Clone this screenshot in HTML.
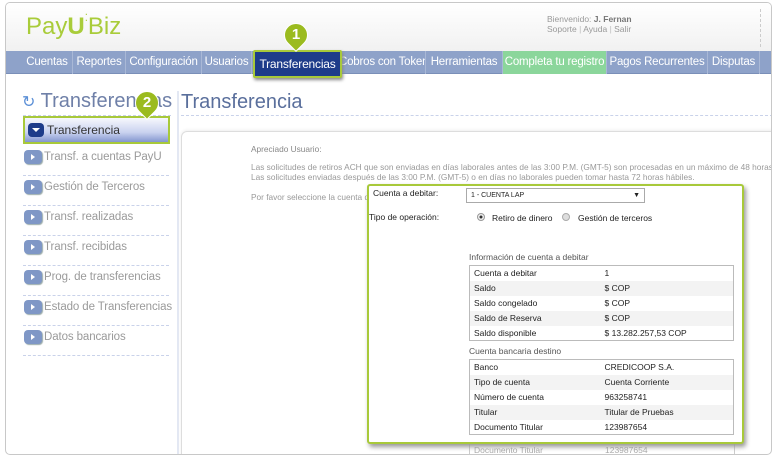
<!DOCTYPE html>
<html><head><meta charset="utf-8"><style>
*{margin:0;padding:0;box-sizing:border-box}
body{width:780px;height:462px;background:#fff;font-family:"Liberation Sans",Arial,sans-serif;position:relative;overflow:hidden}
.abs{position:absolute}
#frame{left:5px;top:2px;width:767px;height:453px;border:1px solid #c8c8c8;border-radius:5px;background:#fff;overflow:hidden}
#hdr{left:0;top:0;width:100%;height:48px;background:linear-gradient(#fff,#f1f1f1)}
#nav{left:0;top:48px;width:100%;height:23px;background:#8ea2c9;border-bottom:1px solid #7a8fb8}
.ni{position:absolute;top:0;height:23px;line-height:22px;color:#fff;font-size:11.5px;border-right:1px solid #a9b8d6;text-align:center;white-space:nowrap;letter-spacing:-0.2px;overflow:hidden}
.side{position:absolute;left:22px;width:146px;height:30px;border-bottom:1px dashed #c9d2ea;color:#9a9a9a;font-size:11.5px;line-height:22px;white-space:nowrap;letter-spacing:-0.1px}
.side i{position:absolute;left:1px;top:4px;width:18px;height:14px;border-radius:4px;background:#7f97c6;box-shadow:1px 1px 1px #9aa}
.side i:after{content:"";position:absolute;left:7px;top:4px;border-left:4px solid #fff;border-top:3px solid transparent;border-bottom:3px solid transparent}
.side span{position:absolute;left:21px;top:0}
.t{font-size:8.3px;color:#999;white-space:nowrap}
table{border-collapse:collapse;font-size:8.5px;color:#222}
.tb{position:absolute;left:469px;width:265px;border:1px solid #bbb}
.tb td{height:15px;padding-left:4px}
.tb tr:nth-child(even) td{background:#f3f3f3}
.tb td:first-child{width:131px}
.pin{position:absolute;width:24px;height:24px;border-radius:50% 50% 50% 0;transform:rotate(-45deg);background:#9bbb1f;border:1px solid #fff}
.pinn{position:absolute;color:#fff;font-weight:bold;font-size:15px;width:24px;text-align:center}
</style></head><body>
<div id="frame" class="abs">
 <div id="hdr" class="abs"></div>
 <div class="abs" style="left:20px;top:10px;font-size:24px;color:#a9cc3a">Pay<b>U</b><span style="font-size:10px;vertical-align:top">⁚</span>Biz</div>
 <div class="abs" style="left:541px;top:11px;font-size:8.5px;color:#999;line-height:10px">Bienvenido: <b style="color:#777">J. Fernan</b><br>Soporte <span style="color:#bbb">|</span> Ayuda <span style="color:#bbb">|</span> Salir</div>
 <div class="abs" style="left:754px;top:6px;height:38px;border-left:1px dashed #ccc"></div>
 <div id="nav" class="abs">
  <div class="ni" style="left:16px;width:51px">Cuentas</div>
  <div class="ni" style="left:67px;width:53px">Reportes</div>
  <div class="ni" style="left:120px;width:76px">Configuración</div>
  <div class="ni" style="left:196px;width:50px">Usuarios</div>
  <div class="ni" style="left:333px;width:87px">Cobros con Token</div>
  <div class="ni" style="left:420px;width:77px">Herramientas</div>
  <div class="ni" style="left:497px;width:104px;background:#8bd69b">Completa tu registro</div>
  <div class="ni" style="left:601px;width:101px">Pagos Recurrentes</div>
  <div class="ni" style="left:702px;width:52px">Disputas</div>
 </div>
 <div class="abs" style="left:247px;top:47px;width:89px;height:28px;background:#1e3c8a;border:2px solid #a8c93a;border-radius:2px;color:#fff;font-size:12px;line-height:24px;text-align:center;box-shadow:1px 2px 3px #888;white-space:nowrap;letter-spacing:-0.2px">Transferencias</div>
 <div class="abs" style="left:16px;top:87px;font-size:20px;color:#6f80a8;white-space:nowrap"><span style="color:#5b8fd6;font-size:16px">↻</span> Transferencias</div>
 <div class="abs" style="left:17px;top:112px;width:148px;border-top:1px dashed #c9d2ea"></div>
 <div class="abs" style="left:171px;top:88px;height:370px;border-left:2px solid #e3e8f3"></div>
 <div class="abs" style="left:17px;top:113px;width:147px;height:28px;border:2px solid #a8c93a;background:linear-gradient(#f7f8fd,#c9d2ef 60%,#8396cf);font-size:12px;color:#333;line-height:24px;padding-left:22px">
  <div class="abs" style="left:3px;top:5px;width:16px;height:14px;border-radius:4px;background:#1e3c8a"></div>
  <div class="abs" style="left:7px;top:10px;border-top:4px solid #fff;border-left:4px solid transparent;border-right:4px solid transparent"></div>Transferencia</div>
 <div class="side" style="top:143px;left:17px"><i></i><span>Transf. a cuentas PayU</span></div>
 <div class="side" style="top:173px;left:17px"><i></i><span>Gestión de Terceros</span></div>
 <div class="side" style="top:203px;left:17px"><i></i><span>Transf. realizadas</span></div>
 <div class="side" style="top:233px;left:17px"><i></i><span>Transf. recibidas</span></div>
 <div class="side" style="top:263px;left:17px"><i></i><span>Prog. de transferencias</span></div>
 <div class="side" style="top:293px;left:17px"><i></i><span>Estado de Transferencias</span></div>
 <div class="side" style="top:323px;left:17px"><i></i><span>Datos bancarios</span></div>
 <div class="abs" style="left:175px;top:88px;font-size:20px;color:#5a6f9c">Transferencia</div>
 <div class="abs" style="left:175px;top:112px;width:592px;border-top:1px dashed #c9d2ea"></div>
 <div class="abs" style="left:175px;top:128px;width:600px;height:340px;border:1px solid #ddd;border-radius:6px;box-shadow:0 -1px 3px #eee"></div>
 <div class="abs t" style="left:245px;top:141px;color:#888">Apreciado Usuario:</div>
 <div class="abs t" style="left:245px;top:160px;line-height:9.5px">Las solicitudes de retiros ACH que son enviadas en días laborales antes de las 3:00 P.M. (GMT-5) son procesadas en un máximo de 48 horas<br>Las solicitudes enviadas después de las 3:00 P.M. (GMT-5) o en días no laborales pueden tomar hasta 72 horas hábiles.</div>
 <div class="abs t" style="left:245px;top:189px">Por favor seleccione la cuenta d</div>
 <div class="abs" style="left:463px;top:435px;width:266px;height:20px;border:1px solid #ccc;font-size:8.5px;color:#aaa;padding:6px 4px">Documento Titular<span style="position:absolute;left:135px">123987654</span></div>
</div>
<div class="abs" style="left:367px;top:184px;width:377px;height:260px;border:2px solid #a8c93a;border-radius:3px;background:#fff;box-shadow:2px 3px 5px #999"></div>
<div class="abs" style="left:373px;top:188px;font-size:8.5px;color:#222">Cuenta a debitar:</div>
<div class="abs" style="left:466px;top:188px;width:179px;height:15px;border:1px solid #aaa;font-size:7px;line-height:13px;padding-left:4px;color:#222">1 - CUENTA LAP<span style="position:absolute;right:4px">▼</span></div>
<div class="abs" style="left:369px;top:212px;font-size:8.5px;color:#222">Tipo de operación:</div>
<div class="abs" style="left:477px;top:213px;width:8px;height:8px;border-radius:50%;border:1px solid #999;background:radial-gradient(#333 30%,#eee 40%)"></div>
<div class="abs" style="left:492px;top:213px;font-size:8.5px;color:#222">Retiro de dinero</div>
<div class="abs" style="left:562px;top:213px;width:8px;height:8px;border-radius:50%;border:1px solid #aaa;background:#ddd"></div>
<div class="abs" style="left:578px;top:213px;font-size:8.5px;color:#222">Gestión de terceros</div>
<div class="abs" style="left:469px;top:252px;font-size:8.5px;color:#555">Información de cuenta a debitar</div>
<table class="tb" style="top:265px"><tr><td>Cuenta a debitar</td><td>1</td></tr><tr><td>Saldo</td><td>$ COP</td></tr><tr><td>Saldo congelado</td><td>$ COP</td></tr><tr><td>Saldo de Reserva</td><td>$ COP</td></tr><tr><td>Saldo disponible</td><td>$ 13.282.257,53 COP</td></tr></table>
<div class="abs" style="left:469px;top:346px;font-size:8.5px;color:#555">Cuenta bancaria destino</div>
<table class="tb" style="top:359px"><tr><td>Banco</td><td>CREDICOOP S.A.</td></tr><tr><td>Tipo de cuenta</td><td>Cuenta Corriente</td></tr><tr><td>Número de cuenta</td><td>963258741</td></tr><tr><td>Titular</td><td>Titular de Pruebas</td></tr><tr><td>Documento Titular</td><td>123987654</td></tr></table>
<div class="pin" style="left:284px;top:23px"></div><div class="pinn" style="left:284px;top:26px">1</div>
<div class="pin" style="left:135px;top:91px"></div><div class="pinn" style="left:135px;top:94px">2</div>
</body></html>
